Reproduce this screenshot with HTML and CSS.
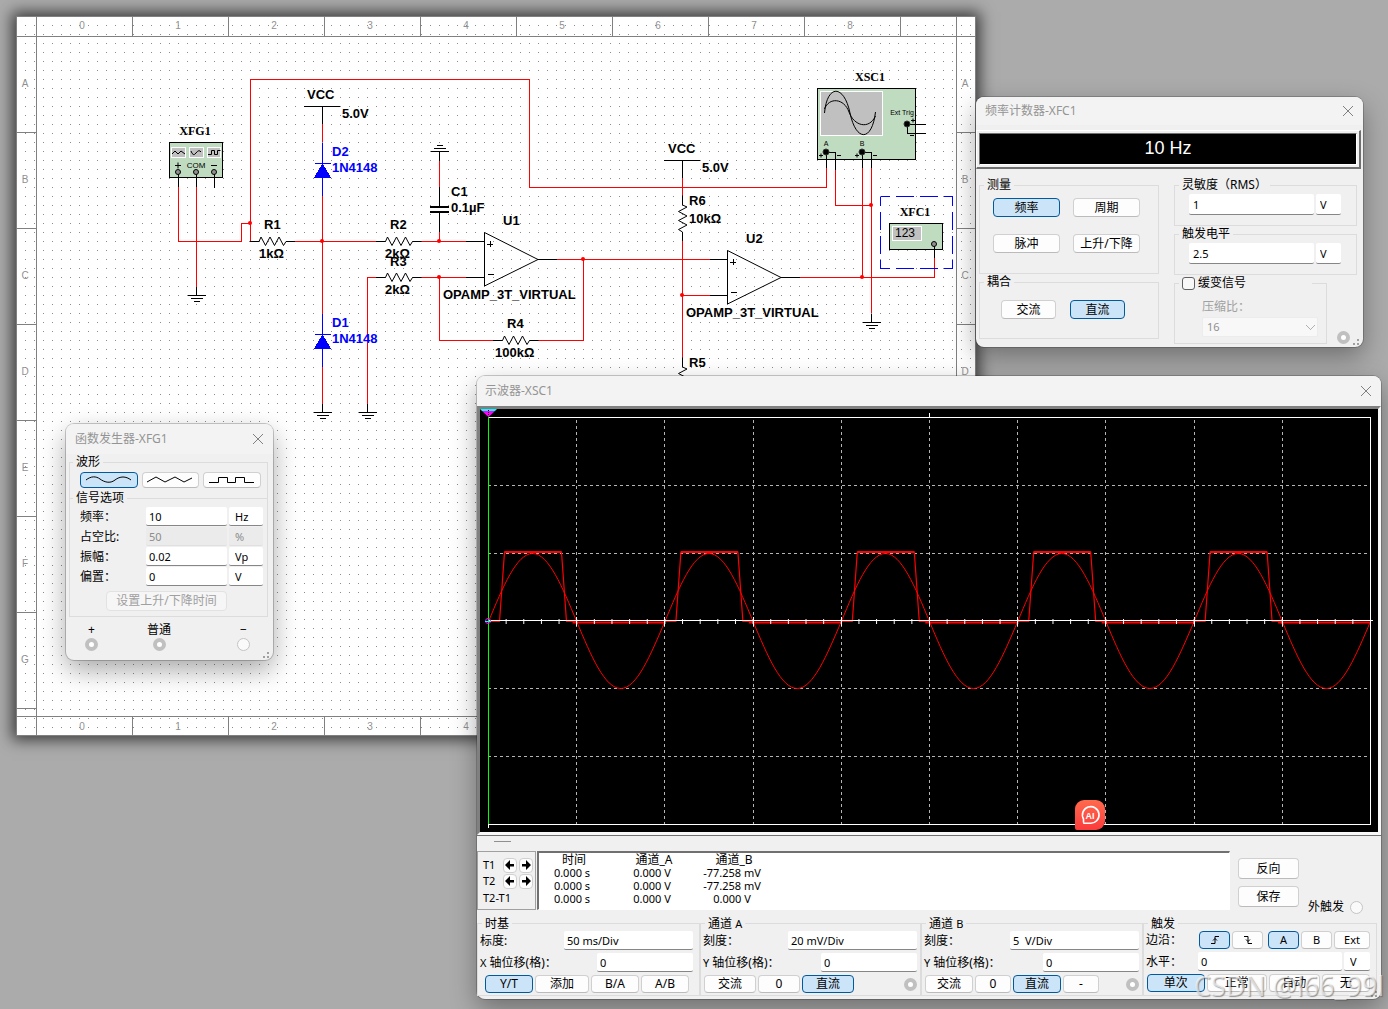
FILE: index.html
```html
<!DOCTYPE html>
<html lang="zh-CN">
<head>
<meta charset="utf-8">
<meta name="viewport" content="width=device-width, initial-scale=1">
<title>电路仿真</title>
<link rel="stylesheet" href="styles.css">
</head>
<body>
<main class="desktop">

  <svg class="sheet" viewBox="16 16 960 720" role="img" aria-label="电路图">
    <defs>
      <pattern id="dots" x="7" y="7" width="9" height="9" patternUnits="userSpaceOnUse"><rect width="1" height="1" fill="#8c8c8c"/></pattern>
      <pattern id="ticks-x" x="36" y="0" width="96" height="800" patternUnits="userSpaceOnUse"><rect width="1" height="800" fill="#808080"/></pattern>
      <pattern id="ticks-y" x="0" y="36" width="1000" height="96" patternUnits="userSpaceOnUse"><rect width="1000" height="1" fill="#808080"/></pattern>
      <path id="res" d="M-9.500 0H0L2-4.500 6.500 4 11-4.500 15.500 4 20-4.500 24.500 4 27 0H36"/>
      <path id="gnd" d="M0-9V0M-9 0H9M-6 3H6M-3 6H3"/>
      <g id="diode"><path d="M0-22V31M-8-1H8" stroke="#00f"/><path d="M0-1 8.500 13H-8.500Z" fill="#00f" stroke="none"/></g>
    </defs>
    <rect x="16" y="16" width="960" height="720" fill="#fff"/>
    <rect x="17" y="17" width="958" height="718" fill="url(#dots)"/>
    <g shape-rendering="crispEdges">
      <rect x="17" y="17" width="940" height="19" fill="url(#ticks-x)"/>
      <rect x="17" y="717" width="940" height="18" fill="url(#ticks-x)"/>
      <rect x="17" y="36" width="19" height="681" fill="url(#ticks-y)"/>
      <rect x="957" y="36" width="18" height="681" fill="url(#ticks-y)"/>
      <path d="M16.500 16.500H975.500V735.500H16.500ZM16 36.500H975M36.500 16V735M16 716.500H975M956.500 16V735" fill="none" stroke="#808080"/>
    </g>
    <g class="ruler">
      <text x="82" y="29">0</text><text x="178" y="29">1</text><text x="274" y="29">2</text><text x="370" y="29">3</text><text x="466" y="29">4</text><text x="562" y="29">5</text><text x="658" y="29">6</text><text x="754" y="29">7</text><text x="850" y="29">8</text>
      <text x="82" y="730">0</text><text x="178" y="730">1</text><text x="274" y="730">2</text><text x="370" y="730">3</text><text x="466" y="730">4</text>
      <text x="25" y="87">A</text><text x="25" y="183">B</text><text x="25" y="279">C</text><text x="25" y="375">D</text><text x="25" y="471">E</text><text x="25" y="567">F</text><text x="25" y="663">G</text>
      <text x="965" y="87">A</text><text x="965" y="183">B</text><text x="965" y="279">C</text><text x="965" y="375">D</text>
    </g>

    <!-- instruments -->
    <g class="case">
      <rect x="169.500" y="142.500" width="53" height="35"/>
      <rect x="817.500" y="88.500" width="98" height="71"/>
      <rect x="889.500" y="223.500" width="53" height="26"/>
    </g>
    <g class="screen">
      <rect x="171.500" y="147.500" width="14" height="10"/><rect x="189.500" y="147.500" width="14" height="10"/><rect x="207.500" y="147.500" width="13" height="10"/>
      <rect x="820.500" y="91.500" width="62" height="44"/>
      <rect x="892.500" y="226.500" width="29" height="14"/>
    </g>
    <g class="ink">
      <path d="M172 154l3-3 3 3 3-3 4 3M191 151q2 6 5 2t5-1M208 154.500h3.500v-4h3v4h3v-4h3"/>
      <path d="M824.500 113C827 84 844 84 850 113S872 142 875.500 112M824.500 109C829 97 844 98 849 112S869 130 875.500 116"/>
      <path d="M175 165.500h6M178 162.500v6M211 165.500h6M819 155.500h4M821 153.500v4M855 155.500h4M857 153.500v4M837 155.500h4M873 155.500h4M911 120.500h4M913 118.500v4M910 135.500h4"/>
    </g>

    <!-- wires -->
    <g class="wire">
      <path d="M178.500 187V241.500H241.500V223.500H250.500M250.500 241V79.500H529.500V187.500H826.500V168M196.500 187V287"/>
      <path d="M322.500 124V142M322.500 196V314M322.500 367V404M295 241.500H376M367.500 404V277.500H376M421 241.500H466M421 277.500H466M439.500 160V187M439.500 232V241M439.500 277V340.500H494M538 340.500H583.500V259.500M557 259.500H710"/>
      <path d="M682.500 178V196M682.500 241V358M682 295.500H710M800 277.500H934.500V258M835.500 170V205.500H871M862.500 168V277M871.500 168V313"/>
    </g>
    <g class="lead">
      <path d="M178.500 173V187M196.500 173V187M214.500 173V188M304 106.500H340M322.500 106V124M664 160.500H700M682.500 160V178"/>
      <path d="M439.500 187V206M439.500 213V232M466 241.500H484M466 277.500H484M538 259.500H557M710 259.500H727M710 295.500H727M781 277.500H800M934.500 244V258"/>
      <path d="M826.500 152V168M826 152.500H835.500V170M862.500 152V168M862 152.500H871.500V168M907 124.500H926M907.500 124V133.500H926M487 244.500h6M490.500 241v6M488 274.500h6M730 262.500h6M733.500 259v6M731 292.500h6"/>
      <path d="M430 207H449M430 212H449" stroke-width="2"/>
    </g>
    <g class="ink">
      <path d="M484.500 232.500V286L538 259.500ZM727.500 250.500V304L781 277.500Z"/>
      <use href="#res" x="259" y="241.500"/><use href="#res" x="385.500" y="241.500"/><use href="#res" x="385.500" y="277.500"/><use href="#res" x="502.500" y="340.500"/>
      <use href="#res" transform="translate(682.500 205) rotate(90)"/><use href="#res" transform="translate(682.500 367) rotate(90)"/>
    </g>
    <g class="lead">
      <use href="#gnd" x="196.500" y="295.500"/><use href="#gnd" x="322.500" y="412.500"/><use href="#gnd" x="367.500" y="412.500"/><use href="#gnd" x="871.500" y="322.500"/>
      <use href="#gnd" transform="translate(439.500 151.500) scale(1 -1)"/>
      <use href="#diode" x="322.500" y="164.500"/><use href="#diode" x="322.500" y="335.500"/>
      <path d="M880.500 196.500H952.500M952.500 196.500V268.500M880.500 268.500H952.500M880.500 196.500V268.500" stroke="#00f" stroke-dasharray="18 6" stroke-dashoffset="9"/>
    </g>
    <g fill="#f00"><circle cx="250" cy="223" r="2"/><circle cx="322" cy="241" r="2"/><circle cx="439" cy="241" r="2"/><circle cx="439" cy="277" r="2"/><circle cx="583" cy="259" r="2"/><circle cx="682" cy="295" r="2"/><circle cx="871" cy="205" r="2"/><circle cx="862" cy="277" r="2"/></g>
    <g class="pin"><circle cx="178" cy="172" r="2.500"/><circle cx="196" cy="172" r="2.500"/><circle cx="214" cy="172" r="2.500"/><circle cx="934" cy="244" r="2.500"/></g>
    <g class="pin jack"><circle cx="826" cy="152" r="3"/><circle cx="862" cy="152" r="3"/><circle cx="907" cy="124" r="3"/></g>

    <g class="part">
      <text x="307" y="99">VCC</text><text x="342" y="118">5.0V</text>
      <text x="264" y="229">R1</text><text x="259" y="258">1kΩ</text>
      <text x="390" y="229">R2</text><text x="385" y="258">2kΩ</text>
      <text x="390" y="266">R3</text><text x="385" y="294">2kΩ</text>
      <text x="451" y="196">C1</text><text x="451" y="212">0.1µF</text>
      <text x="503" y="225">U1</text><text x="443" y="299">OPAMP_3T_VIRTUAL</text>
      <text x="507" y="328">R4</text><text x="495" y="357">100kΩ</text>
      <text x="668" y="153">VCC</text><text x="702" y="172">5.0V</text>
      <text x="689" y="205">R6</text><text x="689" y="223">10kΩ</text><text x="689" y="367">R5</text>
      <text x="746" y="243">U2</text><text x="686" y="317">OPAMP_3T_VIRTUAL</text>
      <g class="diode-name"><text x="332" y="156">D2</text><text x="332" y="172">1N4148</text><text x="332" y="327">D1</text><text x="332" y="343">1N4148</text></g>
    </g>
    <g class="tag"><text x="195" y="135">XFG1</text><text x="870" y="81">XSC1</text><text x="915" y="216">XFC1</text></g>
    <g class="small"><text x="196" y="168" class="com">COM</text><text x="902" y="115">Ext Trig</text><text x="826" y="146">A</text><text x="862" y="146">B</text><text x="905" y="237" class="count">123</text></g>
  </svg>

  <section class="window generator" aria-label="函数发生器">
    <header class="titlebar"><h2>函数发生器-XFG1</h2><button class="close" aria-label="关闭"><svg viewBox="0 0 12 12"><path d="M1 1 11 11M11 1 1 11"/></svg></button></header>
    <fieldset class="waves">
      <legend>波形</legend>
      <div class="group-body">
        <button class="on" aria-label="正弦波"><svg viewBox="0 0 46 10"><path d="M0 5C5 1 10 1 14 4S24 9 29 5 40 1 45 5"/></svg></button>
        <button aria-label="三角波"><svg viewBox="0 0 46 10"><path d="M0 7 9 2 18 7 28 2 37 7 45 3"/></svg></button>
        <button aria-label="方波"><svg viewBox="0 0 46 10"><path d="M0 7.500H9.500V2.500H18.500V7.500H26.500V2.500H35.500V7.500H45"/></svg></button>
      </div>
    </fieldset>
    <fieldset class="signal">
      <legend>信号选项</legend>
      <div class="group-body">
        <label for="g-f">频率：</label><input id="g-f" value="10"><input class="unit" value="Hz" aria-label="频率单位">
        <label for="g-d">占空比:</label><input id="g-d" value="50" disabled><input class="unit" value="%" aria-label="占空比单位" disabled>
        <label for="g-a">振幅：</label><input id="g-a" value="0.02"><input class="unit" value="Vp" aria-label="振幅单位">
        <label for="g-o">偏置：</label><input id="g-o" value="0"><input class="unit" value="V" aria-label="偏置单位">
        <button class="edge-time" disabled>设置上升/下降时间</button>
      </div>
    </fieldset>
    <div class="terminals">
      <label>+<input type="radio" name="t-plus" checked disabled></label>
      <label>普通<input type="radio" name="t-com" checked disabled></label>
      <label>−<input type="radio" name="t-minus"></label>
    </div>
    <span class="grip"></span>
  </section>

  <section class="window counter" aria-label="频率计数器">
    <header class="titlebar"><h2>频率计数器-XFC1</h2><button class="close" aria-label="关闭"><svg viewBox="0 0 12 12"><path d="M1 1 11 11M11 1 1 11"/></svg></button></header>
    <div class="readout"><output>10 Hz</output></div>
    <div class="counter-body">
      <div>
        <fieldset><legend>测量</legend>
          <div class="group-body measure"><button class="on">频率</button><button>周期</button><button>脉冲</button><button>上升/下降</button></div>
        </fieldset>
        <fieldset><legend>耦合</legend>
          <div class="group-body coupling"><button>交流</button><button class="on">直流</button></div>
        </fieldset>
      </div>
      <div>
        <fieldset><legend><label for="c-s">灵敏度（RMS）</label></legend>
          <div class="group-body level"><input id="c-s" value="1"><input class="unit" value="V" aria-label="灵敏度单位"></div>
        </fieldset>
        <fieldset><legend><label for="c-t">触发电平</label></legend>
          <div class="group-body level"><input id="c-t" value="2.5"><input class="unit" value="V" aria-label="触发电平单位"></div>
        </fieldset>
        <div class="slow-row">
          <fieldset class="slow"><legend><label><input type="checkbox">缓变信号</label></legend>
            <div class="group-body"><label for="c-r">压缩比：</label>
              <select id="c-r" disabled><option>16</option></select></div>
          </fieldset>
          <input type="radio" name="c-in" checked disabled aria-label="输入端">
        </div>
      </div>
    </div>
    <span class="grip"></span>
  </section>

  <section class="window scope" aria-label="示波器">
    <header class="titlebar"><h2>示波器-XSC1</h2><button class="close" aria-label="关闭"><svg viewBox="0 0 12 12"><path d="M1 1 11 11M11 1 1 11"/></svg></button></header>
    <div class="trace">
      <svg viewBox="480 409 898 423" role="img" aria-label="波形显示">
        <defs>
          <g id="period" fill="none" stroke="#f00">
            <path d="M0 .5C14.400-34 28.100-67.500 44.100-67.500S73.800-34 88.200 .5 116.300 67.500 132.300 67.500 162 34 176.400 .5"/>
            <path d="M0 .5H11L16-69H73L78 .5H88" stroke-width="1.200"/><path d="M16-69H73M84 1.500H176.400" stroke-width="2"/>
          </g>
          <pattern id="minor" x="488" y="619" width="17.640" height="5" patternUnits="userSpaceOnUse"><rect width="1" height="5" fill="#fff"/></pattern>
        </defs>
        <path class="gridline" d="M488 485.500H1370M488 553.500H1370M488 688.500H1370M488 756.500H1370M576.500 420V824M664.500 420V824M753.500 420V824M841.500 420V824M929.500 420V824M1017.500 420V824M1105.500 420V824M1194.500 420V824M1282.500 420V824"/>
        <path d="M488 417.500H1370.500V824.500H488M488.500 824V828M929.500 413V417" fill="none" stroke="#fff" shape-rendering="crispEdges"/>
        <use href="#period" x="488.500" y="621"/><use href="#period" x="664.900" y="621"/><use href="#period" x="841.300" y="621"/><use href="#period" x="1017.700" y="621"/><use href="#period" x="1194.100" y="621"/>
        <path d="M488 620.500H1373" stroke="#fff" shape-rendering="crispEdges"/>
        <rect x="488" y="619" width="886" height="5" fill="url(#minor)"/>
        <path d="M576.500 617V626M664.500 617V626M753.500 617V626M841.500 617V626M929.500 617V626M1017.500 617V626M1105.500 617V626M1194.500 617V626M1282.500 617V626" stroke="#fff" shape-rendering="crispEdges"/>
        <path d="M488.500 417V824" stroke="#0f0" shape-rendering="crispEdges"/>
        <path d="M480 409H497L495 411H482Z" fill="#0ff"/><path d="M482 411H495L488.500 417Z" fill="#f0f"/><path d="M488.500 410V415" stroke="#000" stroke-dasharray="1 1"/>
        <circle cx="488" cy="621" r="2.500" fill="none" stroke="#f0f"/><path d="M485 621.500h6" stroke="#0ff"/>
      </svg>
      <button class="ai" aria-label="AI 助手"><svg viewBox="0 0 30 30"><path d="M8.500 22.500V19A8.300 8.300 0 1 1 15 23.200H8.200" fill="none" stroke="#fff" stroke-width="1.600"/><text x="15" y="18.500">AI</text></svg></button>
    </div>
    <div class="splitter"></div>
    <div class="cursor-row">
      <div class="cursors">
        <span>T1</span><button aria-label="T1 左移"><svg viewBox="0 0 10 10"><path d="M0 5 5 0V4H9V6.500H5V10Z"/></svg></button><button aria-label="T1 右移"><svg viewBox="0 0 10 10"><path d="M10 5 5 0V4H1V6.500H5V10Z"/></svg></button>
        <span>T2</span><button aria-label="T2 左移"><svg viewBox="0 0 10 10"><path d="M0 5 5 0V4H9V6.500H5V10Z"/></svg></button><button aria-label="T2 右移"><svg viewBox="0 0 10 10"><path d="M10 5 5 0V4H1V6.500H5V10Z"/></svg></button>
        <span class="delta">T2-T1</span>
      </div>
      <div class="values">
        <table>
          <thead><tr><th>时间</th><th>通道_A</th><th>通道_B</th></tr></thead>
          <tbody>
            <tr><td>0.000 s</td><td>0.000 V</td><td>-77.258 mV</td></tr>
            <tr><td>0.000 s</td><td>0.000 V</td><td>-77.258 mV</td></tr>
            <tr><td>0.000 s</td><td>0.000 V</td><td>0.000 V</td></tr>
          </tbody>
        </table>
      </div>
      <div class="actions">
        <button>反向</button><button>保存</button>
        <label class="ext">外触发<input type="radio" name="ext"></label>
      </div>
    </div>
    <div class="settings">
      <fieldset><legend>时基</legend>
        <div class="group-body">
          <div class="line"><label for="s-x">标度:</label><input id="s-x" class="wide" value="50 ms/Div"></div>
          <div class="line"><label for="s-xo"><small>X</small> 轴位移(格)：</label><input id="s-xo" value="0"></div>
          <div class="buttons"><button class="on">Y/T</button><button class="w54">添加</button><button>B/A</button><button>A/B</button></div>
        </div>
      </fieldset>
      <fieldset><legend>通道 <small>A</small></legend>
        <div class="group-body">
          <div class="line"><label for="s-a">刻度：</label><input id="s-a" class="wide" value="20 mV/Div"></div>
          <div class="line"><label for="s-ao"><small>Y</small> 轴位移(格)：</label><input id="s-ao" value="0"></div>
          <div class="buttons"><button class="w52">交流</button><button class="w42">0</button><button class="w52 on">直流</button><input type="radio" name="s-ain" checked disabled aria-label="通道 A 输入端"></div>
        </div>
      </fieldset>
      <fieldset><legend>通道 <small>B</small></legend>
        <div class="group-body">
          <div class="line"><label for="s-b">刻度：</label><input id="s-b" class="wide" value="5  V/Div"></div>
          <div class="line"><label for="s-bo"><small>Y</small> 轴位移(格)：</label><input id="s-bo" value="0"></div>
          <div class="buttons"><button>交流</button><button class="w36">0</button><button class="on">直流</button><button class="w36">-</button><input type="radio" name="s-bin" checked disabled aria-label="通道 B 输入端"></div>
        </div>
      </fieldset>
      <fieldset class="trigger"><legend>触发</legend>
        <div class="group-body">
          <div class="line"><span>边沿：</span>
            <div class="edges"><button class="on" aria-label="上升沿"><svg viewBox="0 0 12 10"><path d="M2 8.500H6V1.500H10M4 5.500 6 3.500 8 5.500"/></svg></button><button aria-label="下降沿"><svg viewBox="0 0 12 10"><path d="M2 1.500H6V8.500H10M4 4.500 6 6.500 8 4.500"/></svg></button><button class="on source">A</button><button>B</button><button class="w36">Ext</button></div></div>
          <div class="line"><label for="s-l">水平：</label><input id="s-l" class="threshold" value="0"><input class="unit" value="V" aria-label="水平单位"></div>
          <div class="buttons modes"><button class="on">单次</button><button>正常</button><button>自动</button><button>无</button></div>
        </div>
      </fieldset>
    </div>
    <span class="grip"></span>
  </section>

  <p class="watermark">CSDN @l66_99l</p>
</main>
</body>
</html>
```
FILE: styles.css
```css
* { box-sizing: border-box; }

body {
  margin: 0;
  font: 12px/16px "Noto Sans", "Noto Sans CJK SC", sans-serif;
  color: #000;
}

button, input, select { font: inherit; color: inherit; margin: 0; }

.desktop {
  position: relative;
  min-height: 100vh;
  overflow: hidden;
  background: #ababab;
}

/* schematic sheet */
.sheet {
  position: absolute;
  left: 16px;
  top: 16px;
  width: 960px;
  box-shadow: 0 0 14px 4px rgba(0, 0, 0, .65);
}
.ruler { font: 10px "Liberation Sans", sans-serif; fill: #909090; text-anchor: middle; }
.case { fill: #c0dcc0; stroke: #000; shape-rendering: crispEdges; }
.screen { fill: #c0c0c0; stroke: #fff; shape-rendering: crispEdges; }
.ink { fill: none; stroke: #000; }
.wire { fill: none; stroke: #f00; shape-rendering: crispEdges; }
.lead { fill: none; stroke: #000; shape-rendering: crispEdges; }
.pin { fill: #909090; stroke: #000; }
.jack { fill: #000; stroke: #333; }
.part { font: bold 13px "Liberation Sans", sans-serif; }
.diode-name { fill: #00f; }
.tag { font: bold 12px "Liberation Serif", serif; text-anchor: middle; }
.small { font: 7px "Liberation Sans", sans-serif; text-anchor: middle; }
.com { font-size: 8px; }
.count { font-size: 12px; }

/* window frame */
.window {
  position: absolute;
  display: flex;
  flex-direction: column;
  background: #f0f0f0;
  border-radius: 8px;
  box-shadow: 0 0 0 1px rgba(0, 0, 0, .2), 0 10px 26px rgba(0, 0, 0, .35);
}
.titlebar {
  display: flex;
  align-items: center;
  justify-content: space-between;
  height: 30px;
  padding: 0 9px;
  background: #f3f3f3;
  border-radius: 8px 8px 0 0;
}
.titlebar h2 { margin: 0; font-size: 12px; font-weight: 400; color: #949494; }
.close { width: 12px; height: 12px; padding: 0; border: 0; background: none; }
.close svg { display: block; fill: none; stroke: #808080; }
.grip {
  position: absolute;
  right: 2px;
  bottom: 2px;
  width: 10px;
  height: 10px;
  background: repeating-conic-gradient(#a0a0a0 0 25%, transparent 0 100%) 0 0 / 4px 4px;
  clip-path: polygon(100% 0, 100% 100%, 0 100%);
}

/* controls */
fieldset { min-width: 0; margin: 0; padding: 0; border: 1px solid #dcdcdc; }
legend { height: 16px; margin-left: 4px; padding: 0 3px; }
small { font-size: 11px; }

.group-body button, .actions button {
  display: flex;
  align-items: center;
  justify-content: center;
  height: 19px;
  padding: 0;
  border: 1px solid #d0d0d0;
  border-bottom-color: #bbb;
  border-radius: 4px;
  background: #fdfdfd;
  white-space: nowrap;
}
.group-body button.on { border-color: #005a9e; background: #cce4f7; }
.group-body button:disabled { color: #a0a0a0; background: #f6f6f6; border-color: #e2e2e2; }

input:not([type]) {
  width: 100%;
  height: 19px;
  padding: 0 3px;
  border: 0;
  border-bottom: 1px solid #868686;
  border-radius: 2px;
  background: #fff;
  font-size: 11px;
}
input:not([type]):disabled { color: #8c8c8c; background: #ebebeb; border-color: #e0e0e0; }
input.unit { padding: 0 6px; }

input[type="radio"] {
  appearance: none;
  flex: none;
  width: 13px;
  height: 13px;
  border: 1px solid #c4c4c4;
  border-radius: 50%;
  background: #fafafa;
}
input[type="radio"]:checked { border: 4px solid #c0c0c0; background: #fff; }

/* function generator */
.generator { left: 66px; top: 424px; width: 207px; padding: 0 5px 9px 3px; }
.generator .titlebar { margin: 0 -5px 0 -3px; }
.waves { border-bottom: 0; }
.waves .group-body { display: grid; grid-template-columns: repeat(3, 1fr); gap: 4px; padding: 2px 6px 10px 10px; }
.waves button { height: 16px; }
.waves svg { width: 46px; height: 10px; fill: none; stroke: #000; }
.signal { margin-top: -8px; }
.signal .group-body {
  display: grid;
  grid-template-columns: 64px 1fr 34px;
  gap: 1px 2px;
  align-items: center;
  padding: 1px 4px 5px 10px;
}
.signal .edge-time { grid-column: 1 / -1; width: 121px; height: 20px; margin: 4px 0 0 26px; }
.generator legend { margin-left: 3px; }
.terminals {
  display: grid;
  grid-template-columns: 62px 1fr auto;
  justify-items: start;
  padding: 5px 18px 0 16px;
}
.terminals label { display: flex; flex-direction: column; align-items: center; }

/* frequency counter */
.counter { left: 976px; top: 97px; width: 387px; }
.counter .titlebar { height: 28px; margin-bottom: 5px; }
.readout {
  margin: 0 2px 0 0;
  padding: 2px;
  border: 1px solid #fff;
  border-right: 2px solid #707070;
  border-bottom: 2px solid #707070;
}
.readout output {
  display: block;
  height: 32px;
  border: 1px solid #707070;
  border-right-color: #fff;
  border-bottom-color: #fff;
  background: #000;
  color: #fff;
  font: 18px/28px "Liberation Sans", sans-serif;
  text-align: center;
}
.counter-body {
  display: grid;
  grid-template-columns: 180px 1fr;
  gap: 15px;
  padding: 8px 6px 3px 3px;
}
.measure { display: grid; grid-template-columns: 67px 67px; gap: 17px 13px; padding: 5px 0 20px 13px; }
.coupling { display: grid; grid-template-columns: 55px 55px; gap: 14px; padding: 10px 0 19px 21px; }
.level { display: grid; grid-template-columns: 1fr 25px; gap: 2px; padding: 1px 15px 10px 14px; }
.level input:not([type]) { height: 21px; padding-left: 4px; }
.slow-row { display: flex; align-items: flex-end; gap: 10px; }
.slow { flex: none; width: 153px; }
.slow legend { width: 133px; }
.slow legend label { display: flex; align-items: center; gap: 3px; }
.slow input { appearance: none; width: 13px; height: 13px; border: 1px solid #606060; border-radius: 3px; background: #f8f8f8; }
.slow .group-body { display: flex; flex-direction: column; gap: 2px; padding: 8px 8px 6px 27px; color: #a0a0a0; }
.slow select {
  appearance: none;
  height: 20px;
  padding: 0 4px;
  border: 1px solid #ececec;
  border-radius: 2px;
  background: linear-gradient(45deg, transparent 46%, #b0b0b0 46% 58%, transparent 58%) 103px 7px / 5px 5px no-repeat, linear-gradient(-45deg, transparent 46%, #b0b0b0 46% 58%, transparent 58%) 107px 7px / 5px 5px no-repeat, #f8f8f8;
  color: #909090;
  font-size: 11px;
  opacity: 1;
}

/* oscilloscope */
.scope { left: 477px; right: 7px; top: 376px; padding-bottom: 3px; }
.scope .titlebar { padding: 0 9px 0 8px; }
.trace {
  position: relative;
  border: 3px solid #808080;
  border-right-color: #f8f8f8;
  border-bottom-color: #f8f8f8;
  box-shadow: 0 1px 0 #707070;
  background: #000;
}
.trace > svg { display: block; width: 100%; }
.gridline { fill: none; stroke: #b4b4b4; stroke-dasharray: 3 3; shape-rendering: crispEdges; }
.ai {
  position: absolute;
  right: 273px;
  bottom: 2px;
  width: 30px;
  height: 30px;
  padding: 0;
  border: 0;
  border-radius: 9px 9px 9px 2px;
  background: linear-gradient(#ff6a4d, #fb3b3b);
}
.ai svg { display: block; }
.ai text { font: bold 9px "Liberation Sans", sans-serif; fill: #fff; text-anchor: middle; }
.splitter { width: 17px; height: 1px; margin: 6px 0 9px 17px; background: #909090; }

.cursor-row { display: flex; height: 59px; }
.cursors {
  display: grid;
  grid-template-columns: 19px 15px 15px;
  grid-template-rows: 16px 16px 18px;
  gap: 0 1px;
  align-items: center;
  width: 59px;
  padding: 5px 0 0 5px;
  border: 1px solid #a0a0a0;
  font-size: 11px;
}
.cursors button { width: 14px; height: 15px; padding: 0 1px; border: 1px solid #d0d0d0; border-radius: 4px; background: #fdfdfd; }
.cursors svg { display: block; }
.delta { grid-column: 1 / -1; }
.values {
  flex: 1;
  margin-left: 1px;
  border: 2px solid #707070;
  border-right: 1px solid #fff;
  border-bottom: 1px solid #fff;
  background: #fff;
}
.values table { border-collapse: collapse; table-layout: fixed; width: 226px; font-size: 11px; line-height: 13px; text-align: center; }
.values th { width: 66px; padding: 0 0 0 4px; font-size: 12px; font-weight: 400; white-space: nowrap; }
.values th:nth-child(2) { width: 94px; }
.values td { padding: 0; white-space: nowrap; }
.actions {
  display: grid;
  grid-template-columns: 61px 1fr;
  grid-template-rows: 21px 21px;
  gap: 7px 9px;
  width: 151px;
  padding: 7px 0 0 8px;
}
.actions button { height: 21px; grid-column: 1; }
.ext { grid-column: 2; grid-row: 2; display: flex; align-items: center; gap: 6px; margin-top: 21px; white-space: nowrap; }

.settings {
  display: grid;
  grid-template-columns: 223fr 221fr 222fr 234fr;
  margin-right: 4px;
  padding-top: 6px;
}
.settings legend { height: 15px; line-height: 15px; }
.settings .group-body { display: flex; flex-direction: column; gap: 3px; padding: 0 3px 2px 2px; }
.settings fieldset:first-child .group-body { padding-right: 6px; }
.line { display: flex; align-items: center; }
.line label, .line > span { flex: 1; white-space: nowrap; }
.line input:not([type]) { width: 96px; }
.line input.wide { width: 129px; white-space: pre; }
.buttons { display: flex; align-items: center; gap: 2px; padding-left: 1px; }
.settings fieldset:first-child .buttons { padding-left: 5px; }
.settings .buttons button { width: 48px; height: 18px; }
.settings .buttons .w54 { width: 54px; }
.settings .buttons .w52 { width: 52px; }
.settings .buttons .w42 { width: 42px; }
.settings .w36.w36 { width: 36px; }
.buttons input { margin-left: auto; }
.edges { display: flex; gap: 2px; }
.edges button { width: 31px; height: 18px; font-size: 11px; }
.edges svg { width: 12px; height: 10px; fill: none; stroke: #000; }
.edges .source { margin-left: 3px; }
.trigger .group-body { padding-right: 6px; }
.line input.threshold { width: 144px; margin-right: 2px; }
.line input.unit { width: 26px; }
.trigger .modes { display: grid; grid-template-columns: 57fr 60fr 50fr 48fr; }
.trigger .modes button { width: auto; }

.watermark {
  position: absolute;
  right: 4px;
  bottom: 8px;
  margin: 0;
  font: 27px/30px "Open Sans", sans-serif;
  color: rgba(255, 255, 255, .6);
  text-shadow: 1px 1px 1px rgba(90, 90, 90, .6);
  pointer-events: none;
}
```
